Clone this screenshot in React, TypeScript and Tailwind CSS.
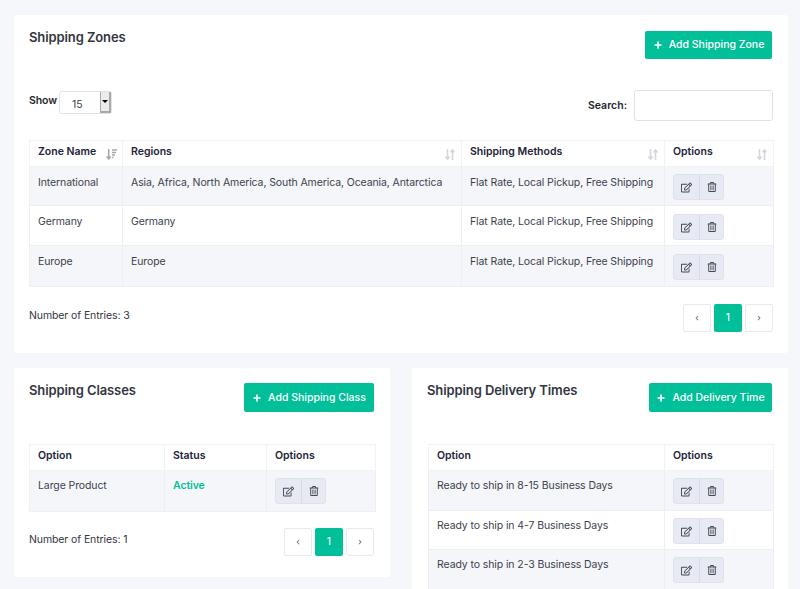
import { Plus } from 'lucide-react'
import { FaRegEdit, FaRegTrashAlt } from 'react-icons/fa'

const zones = [
  { name: 'International', regions: 'Asia, Africa, North America, South America, Oceania, Antarctica', h: 'h-[39px]', pad: 'pt-[7px]' },
  { name: 'Germany', regions: 'Germany', h: 'h-[40px]', pad: 'pt-[8px]' },
  { name: 'Europe', regions: 'Europe', h: 'h-[41px]', pad: 'pt-[8px]' },
]
const times = [
  { label: '8-15', h: 'h-[40px]' },
  { label: '4-7', h: 'h-[39px]' },
  { label: '2-3', h: 'h-[40px]' },
]

function SortIcon({ active }: { active?: boolean }) {
  if (active) {
    return (
      <svg width="11" height="11" viewBox="0 0 11 11" fill="none" stroke="#a3a7b0" strokeWidth="1.5" className="absolute top-[8px] right-[5px]">
        <path d="M2.7 0v9.5M.6 7.4l2.1 2.4 2.1-2.4" />
        <path d="M6 1h5M6 3.5h4M6 6h3M6 8.5h1.5" />
      </svg>
    )
  }
  return (
    <svg width="10" height="11" viewBox="0 0 10 11" fill="none" stroke="#d3d6dc" strokeWidth="1.6" className="absolute top-[8px] right-[6px]">
      <path d="M2.5 0v10M.4 7.6l2.1 2.4 2.1-2.4" />
      <path d="M7.5 11V1M5.4 3.4l2.1-2.4 2.1 2.4" />
    </svg>
  )
}

function AddButton({ label, size }: { label: string; size: string }) {
  return (
    <button type="button" className={`flex ${size} items-center justify-center gap-[6px] rounded-[2px] bg-[#00bf99] text-[10.5px] font-medium text-white`}>
      <Plus className="h-[10px] w-[10px]" strokeWidth={4} />
      <span>{label}</span>
    </button>
  )
}

function Actions() {
  return (
    <div className="flex h-[26px] w-[51px] rounded-[3px] border border-[#dfe2ec] bg-[#e8eaf3] text-[#43464f]">
      <div className="flex w-[26px] items-center justify-center border-r border-[#d8dbe6]">
        <FaRegEdit className="h-[11px] w-[11px]" />
      </div>
      <div className="flex flex-1 items-center justify-center">
        <FaRegTrashAlt className="h-[10px] w-[10px]" />
      </div>
    </div>
  )
}

function Pagination() {
  const cell = 'flex h-[28px] w-[28px] items-center justify-center rounded-[2px]'
  return (
    <div className="flex gap-[3px] text-[9px]">
      <div className={`${cell} border border-[#e7e9ee] bg-white text-[#555]`}>‹</div>
      <div className={`${cell} bg-[#00bf99] text-[10.5px] font-normal text-white`}>1</div>
      <div className={`${cell} border border-[#e7e9ee] bg-white text-[#555]`}>›</div>
    </div>
  )
}

function Th({ children, sort }: { children: React.ReactNode; sort?: 'on' | 'off' }) {
  return (
    <th className="relative h-[26px] border border-[#f1f2f6] px-[8px] pb-[3px] text-left align-middle text-[10.5px] leading-none font-semibold text-[#22243a]">
      {children}
      {sort && <SortIcon active={sort === 'on'} />}
    </th>
  )
}

function Td({ children, pad = 'pt-[8px]' }: { children: React.ReactNode; pad?: string }) {
  return (
    <td className={`border border-[#eeeff4] px-[8px] ${pad} align-top text-[10.5px] leading-[15px] tracking-[-0.1px] whitespace-nowrap text-[#3c3f4f]`}>
      {children}
    </td>
  )
}

export default function App() {
  return (
    <div className="flex h-[589px] flex-col gap-[15px] overflow-hidden bg-[#f5f7fb] pt-[15px] pr-[12px] pl-[14px] font-['Inter','Liberation_Sans',sans-serif]">
      <section className="h-[338px] shrink-0 rounded-[3px] bg-white px-[15px] pt-[16px]">
        <div className="flex items-start justify-between">
          <h2 className="text-[13px] leading-[13px] font-semibold tracking-[-0.1px] text-[#33353f]">Shipping Zones</h2>
          <div className="pr-px"><AddButton label="Add Shipping Zone" size="h-[28px] w-[127px]" /></div>
        </div>
        <div className="mt-[31px] flex items-start justify-between">
          <div className="flex items-start gap-[2px] pt-px">
            <span className="w-[28px] pt-[3px] text-[10.5px] leading-[14px] font-semibold tracking-[-0.1px] text-[#26272f]">Show</span>
            <div className="flex h-[23px] w-[53px] rounded-[3px] border border-[#dfe2ea] bg-white">
              <span className="flex-1 pt-[6px] pl-[12px] text-[10.5px] leading-[14px] text-[#3c3f4f]">15</span>
              <span className="flex w-[11px] items-center justify-center border-r-2 border-b-2 border-l border-[#a9a9a9] bg-[#ececec]">
                <span className="h-0 w-0 border-x-[3px] border-t-[3px] border-x-transparent border-t-black" />
              </span>
            </div>
          </div>
          <div className="flex items-center gap-[7px]">
            <span className="text-[10.5px] font-semibold text-[#26272f]">Search:</span>
            <div className="h-[31px] w-[139px] rounded-[3px] border border-[#dfe2ea] bg-white" />
          </div>
        </div>
        <table className="mt-[19px] w-[744px] table-fixed border-collapse">
          <colgroup>
            <col className="w-[93px]" />
            <col className="w-[339px]" />
            <col className="w-[203px]" />
            <col className="w-[109px]" />
          </colgroup>
          <thead>
            <tr>
              <Th sort="on">Zone Name</Th>
              <Th sort="off">Regions</Th>
              <Th sort="off">Shipping Methods</Th>
              <Th sort="off">Options</Th>
            </tr>
          </thead>
          <tbody>
            {zones.map((z, i) => (
              <tr key={z.name} className={`${z.h} ${i % 2 === 0 ? 'bg-[#f5f6f9]' : 'bg-white'}`}>
                <Td>{z.name}</Td>
                <Td>{z.regions}</Td>
                <Td>Flat Rate, Local Pickup, Free Shipping</Td>
                <Td pad={z.pad}><Actions /></Td>
              </tr>
            ))}
          </tbody>
        </table>
        <div className="mt-[17px] flex items-start justify-between">
          <span className="pt-[4px] text-[10.5px] leading-[15px] tracking-[-0.1px] text-[#33353f]">Number of Entries: 3</span>
          <Pagination />
        </div>
      </section>

      <div className="flex items-start justify-between">
        <section className="h-[209px] w-[376px] rounded-[3px] bg-white px-[15px] pt-[15px]">
          <div className="flex items-start justify-between">
            <h2 className="pt-px text-[13px] leading-[13px] font-semibold tracking-[-0.1px] text-[#33353f]">Shipping Classes</h2>
            <div className="pr-px"><AddButton label="Add Shipping Class" size="h-[29px] w-[130px]" /></div>
          </div>
          <table className="mt-[32px] w-[346px] table-fixed border-collapse">
            <colgroup>
              <col className="w-[135px]" />
              <col className="w-[102px]" />
              <col className="w-[109px]" />
            </colgroup>
            <thead>
              <tr>
                <Th>Option</Th>
                <Th>Status</Th>
                <Th>Options</Th>
              </tr>
            </thead>
            <tbody>
              <tr className="h-[41px] bg-[#f5f6f9]">
                <Td pad="pt-[7px]">Large Product</Td>
                <Td pad="pt-[7px]"><span className="font-semibold text-[#00bf99]">Active</span></Td>
                <Td pad="pt-[7px]"><Actions /></Td>
              </tr>
            </tbody>
          </table>
          <div className="mt-[16px] flex items-start justify-between pr-px">
            <span className="pt-[4px] text-[10.5px] leading-[15px] tracking-[-0.1px] text-[#33353f]">Number of Entries: 1</span>
            <Pagination />
          </div>
        </section>

        <section className="h-[300px] w-[376px] rounded-[3px] bg-white px-[15px] pt-[15px]">
          <div className="flex items-start justify-between">
            <h2 className="pt-px text-[13px] leading-[13px] font-semibold tracking-[-0.1px] text-[#33353f]">Shipping Delivery Times</h2>
            <div className="pr-px"><AddButton label="Add Delivery Time" size="h-[29px] w-[123px]" /></div>
          </div>
          <table className="mt-[32px] ml-px w-[345px] table-fixed border-collapse">
            <colgroup>
              <col className="w-[236px]" />
              <col className="w-[109px]" />
            </colgroup>
            <thead>
              <tr>
                <Th>Option</Th>
                <Th>Options</Th>
              </tr>
            </thead>
            <tbody>
              {times.map((t, i) => (
                <tr key={t.label} className={`${t.h} ${i % 2 === 0 ? 'bg-[#f5f6f9]' : 'bg-white'}`}>
                  <Td pad="pt-[7px]">Ready to ship in {t.label} Business Days</Td>
                  <Td pad="pt-[7px]"><Actions /></Td>
                </tr>
              ))}
            </tbody>
          </table>
        </section>
      </div>
    </div>
  )
}
